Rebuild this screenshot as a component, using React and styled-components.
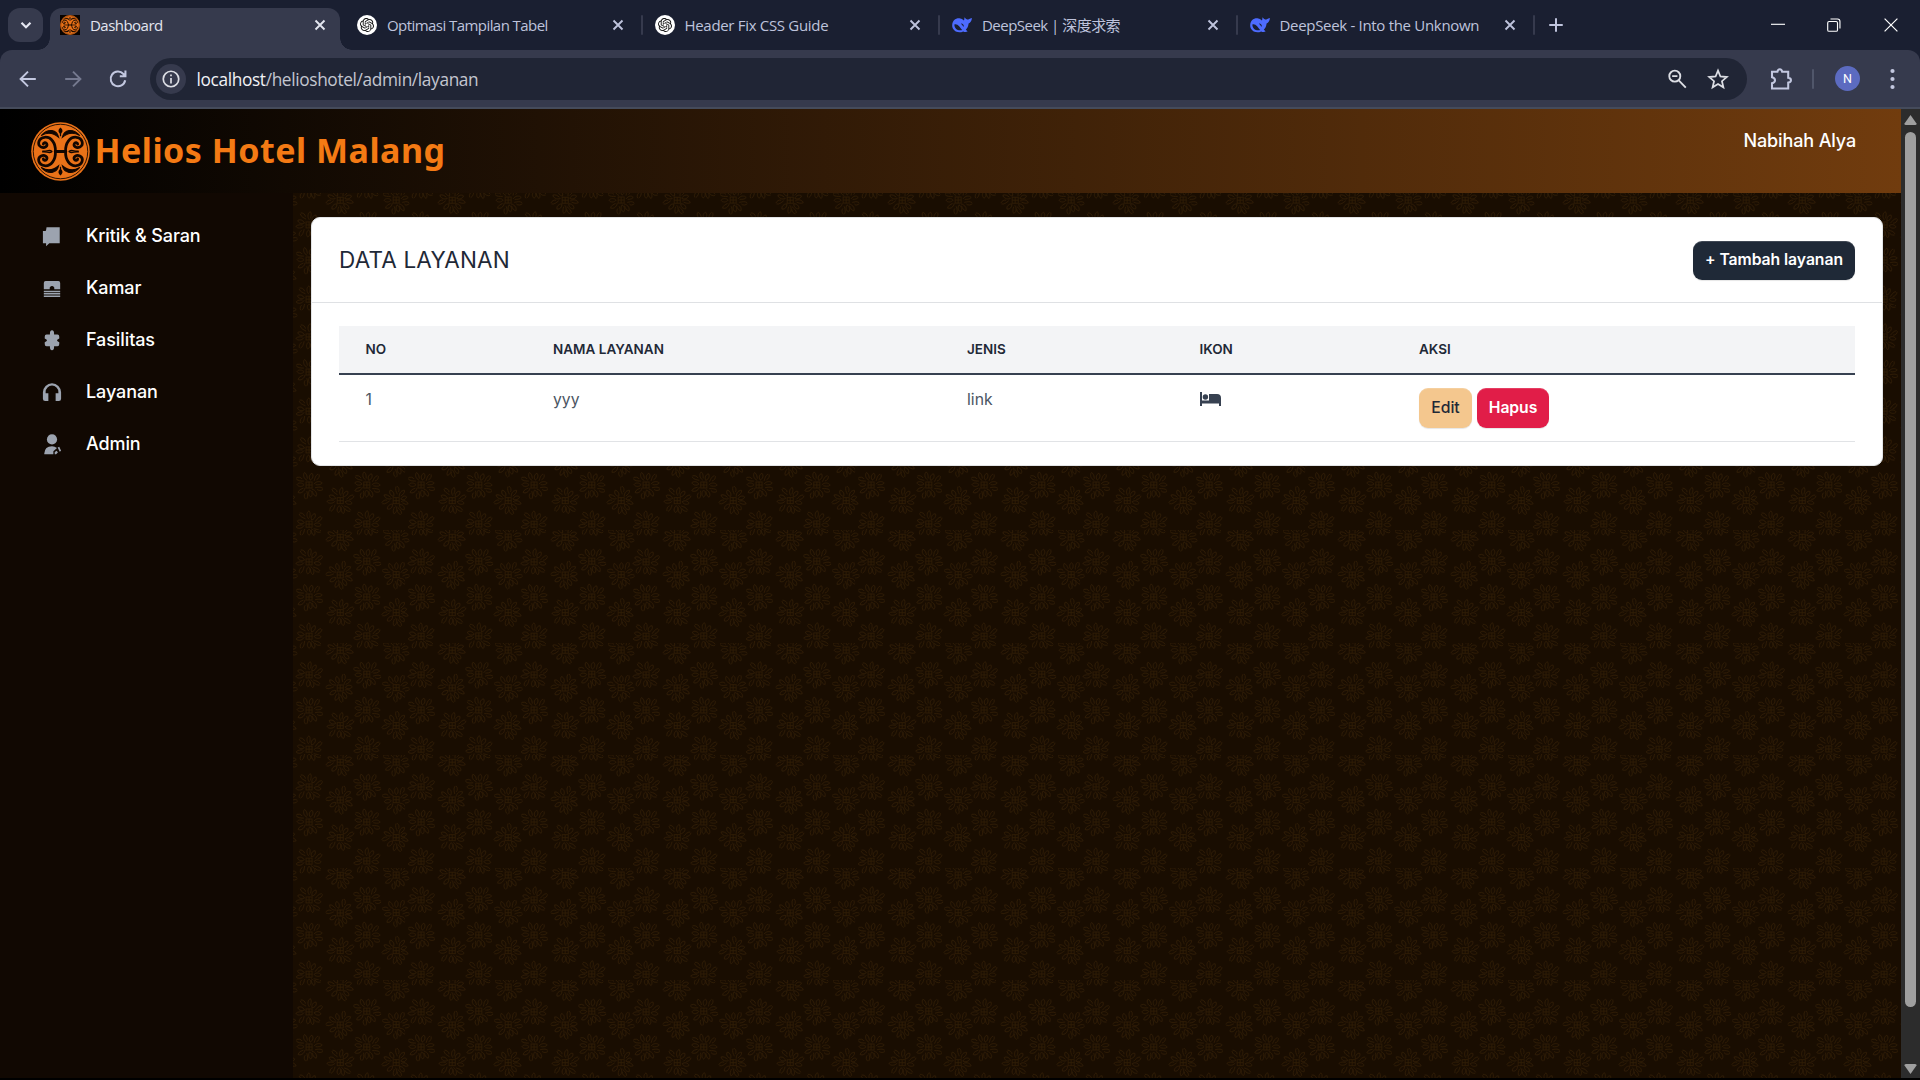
import React from "react";
import styled, { createGlobalStyle } from "styled-components";
import { SiOpenai } from "react-icons/si";

const GlobalStyle = createGlobalStyle`
  * { box-sizing: border-box; }
  body { margin: 0; background: #000; overflow: hidden; font-family: Inter, "Liberation Sans", sans-serif; }
  button { font: inherit; border: 0; margin: 0; padding: 0; background: none; color: inherit; }
  svg { display: block; flex: none; }
`;

const petalAngles = [4, 40, 66, 90, 128, 166, 196, 232, 268, 300, 334];
const petalShapes = [
  "M5 0C7-2.4 10.5-2.4 12 0C10.5 2.2 7 2.2 5 0",
  "M6.5 .5C9-.8 11-2.5 14-1.6M9 1.4C11 2.4 13.5 1.2 14.5-.6",
  "M5 0C8-2.8 12-2 13.2 .4C11.5 2 8.5 1.4 6.5 .8",
];
const flowers = [
  [16, -6.8, 0], [16, 31.8, 6], [16, 66.7, 16], [16, 105.7, 0],
  [47, 7.2, 5], [47, 44.8, 20], [47, 82.3, 9],
  [73.5, -7, 3], [73.5, 31, 10], [73.5, 66.7, 25], [73.5, 105.5, 3],
  [102.7, 7, 13], [102.7, 44.5, 4], [102.7, 82.3, 8],
];
const flowerMarkup = (x, y, turn) =>
  `<g transform='translate(${x} ${y})'><rect x='-3' y='-3' width='6' height='6'/><path d='M0-3V3M-3 0H3'/>` +
  petalAngles
    .map((a, i) => `<path transform='rotate(${a + turn})' d='${petalShapes[(i + turn) % 3]}'/>`)
    .join("") +
  "</g>";
const batik =
  "<svg xmlns='http://www.w3.org/2000/svg' width='112.5' height='112.5' viewBox='0 0 112.5 112.5'><g fill='none' stroke='#2f1c05' stroke-width='.85'>" +
  flowers.map((f) => flowerMarkup(...f) + (f[0] > 100 ? flowerMarkup(f[0] - 112.5, f[1], f[2]) : "")).join("") +
  "</g></svg>";
const batikUrl = `url("data:image/svg+xml,${encodeURIComponent(batik).replace(/'/g, "%27")}")`;

const Window = styled.div`
  width: 1920px;
  height: 1080px;
  display: flex;
  flex-direction: column;
  background: #000;
  overflow: hidden;
`;
const TabStrip = styled.div`
  height: 50px;
  display: flex;
  align-items: flex-start;
  padding: 8px 0 0 8px;
  background: #1a1f31;
  color: #c0c5de;
  font: 15px "Open Sans", "Noto Sans CJK SC", sans-serif;
`;
const TabSearch = styled.button`
  width: 35px;
  height: 34px;
  border-radius: 12px;
  background: #363a4d;
  display: grid;
  place-items: center;
  color: #e5e7f2;
`;
const Tab = styled.div`
  position: relative;
  width: ${(p) => (p.$active ? 290 : 297.5)}px;
  height: 42px;
  margin-left: ${(p) => (p.$active ? 7 : 0)}px;
  padding: 0 11px 8px ${(p) => (p.$active ? 10 : 17)}px;
  display: flex;
  align-items: center;
  gap: 10px;
  border-radius: 12px 12px 0 0;
  background: ${(p) => (p.$active ? "#363a4d" : "transparent")};
  color: ${(p) => (p.$active ? "#e3e5ef" : "#bec3dc")};
  &::before, &::after {
    content: "";
    display: ${(p) => (p.$active ? "block" : "none")};
    position: absolute;
    bottom: 0;
    width: 12px;
    height: 12px;
  }
  &::before { left: -12px; background: radial-gradient(circle at 0 0, transparent 11.5px, #363a4d 12px); }
  &::after { right: -12px; background: radial-gradient(circle at 100% 0, transparent 11.5px, #363a4d 12px); }
`;
const TabTitle = styled.span`
  flex: 1;
  white-space: nowrap;
  line-height: 20px;
  letter-spacing: ${(p) => p.$track}px;
`;
const Divider = styled.span`
  flex: none;
  width: 2px;
  height: 20px;
  margin: ${(p) => p.$margin};
  border-radius: 1px;
  background: ${(p) => p.$color || "#363a4d"};
`;
const GptBadge = styled.span`
  width: 20px;
  height: 20px;
  border-radius: 50%;
  background: #fff;
  color: #111;
  display: grid;
  place-items: center;
`;
const NewTab = styled.button`
  height: 34px;
  margin-left: 17px;
  display: grid;
  place-items: center;
`;
const WindowButtons = styled.div`
  margin-left: auto;
  display: flex;
  align-items: center;
  gap: 42px;
  height: 34px;
  padding-right: 21px;
  color: #fff;
`;
const ToolbarShell = styled.div`
  background: #1a1f31;
`;
const Toolbar = styled.div`
  height: 59px;
  display: flex;
  align-items: center;
  padding: 0 25px 0 16px;
  background: #363a4d;
  border-bottom: 2px solid #454b5b;
  border-radius: 12px 12px 0 0;
  color: #c3c8e0;
`;
const NavButtons = styled.div`
  display: flex;
  gap: 21px;
  width: 134px;
  align-items: center;
`;
const Omnibox = styled.div`
  flex: none;
  width: 1597px;
  height: 42px;
  padding: 0 18px 0 6px;
  border-radius: 21px;
  background: #202535;
  display: flex;
  align-items: center;
  color: #dcdee4;
`;
const InfoBadge = styled.span`
  width: 30px;
  height: 30px;
  border-radius: 50%;
  background: #363a4d;
  display: grid;
  place-items: center;
`;
const Address = styled.span`
  flex: 1;
  padding: 2px 0 0 10.5px;
  font: 17.3px/24px "Open Sans", sans-serif;
  letter-spacing: -0.36px;
  color: #c3c6d0;
  b { font-weight: 400; color: #f1f2f6; }
`;
const OmniActions = styled.div`
  display: flex;
  gap: 19px;
  padding-top: 1px;
`;
const Tail = styled.div`
  flex: 1;
  display: flex;
  align-items: center;
  padding-left: 22px;
`;
const ProfileSlot = styled.div`
  margin: 0 auto 0 21px;
`;
const Profile = styled.span`
  width: 25px;
  height: 25px;
  border-radius: 50%;
  background: #5c6bc0;
  color: #fff;
  display: grid;
  place-items: center;
  font: 12.5px Roboto, sans-serif;
`;
const Viewport = styled.div`
  height: 969px;
  display: flex;
`;
const Page = styled.div`
  width: 1901px;
  display: flex;
  flex-direction: column;
`;
const Header = styled.header`
  height: 84px;
  flex: none;
  display: flex;
  align-items: flex-start;
  justify-content: space-between;
  padding: 13px 45px 0 31px;
  background: linear-gradient(90deg, #000 0%, #713c0e 100%);
`;
const Brand = styled.div`
  display: flex;
  align-items: center;
  gap: 4.5px;
`;
const BrandName = styled.span`
  font: 700 34px/46px "Noto Sans", sans-serif;
  padding-bottom: 3px;
  letter-spacing: 0.5px;
  color: #f47a14;
  white-space: nowrap;
`;
const UserName = styled.span`
  margin-top: 5px;
  font-size: 18px;
  line-height: 27px;
  font-weight: 500;
  letter-spacing: -0.13px;
  color: #fff;
`;
const Body = styled.div`
  flex: 1;
  display: flex;
`;
const Sidebar = styled.nav`
  width: 293px;
  padding: 17px 0 0 40px;
  background: #110802;
`;
const SideItem = styled.a`
  height: 52px;
  display: flex;
  align-items: center;
  gap: 22px;
  color: #fff;
  font-size: 18px;
  font-weight: 500;
  letter-spacing: -0.1px;
  svg { color: #9ca3af; }
`;
const SideLabel = styled.span`
  padding-bottom: 2px;
`;
const Main = styled.main`
  flex: 1;
  padding: 24px 18px;
  background: #190d01 ${batikUrl} 0 0 / 112.5px 112.5px;
`;
const Card = styled.section`
  height: 249px;
  background: #fff;
  border: 1px solid #e2e4e6;
  border-radius: 9px;
`;
const CardHeader = styled.div`
  height: 85px;
  display: flex;
  align-items: center;
  justify-content: space-between;
  padding: 0 27px;
  border-bottom: 1px solid #dfe1e4;
`;
const CardTitle = styled.h2`
  margin: 0;
  padding-bottom: 2px;
  font-size: 22.5px;
  font-weight: 400;
  letter-spacing: 0.18px;
  color: #1f2937;
`;
const tones = {
  dark: ["#1f2937", "#fff", 600],
  sand: ["#f4c78e", "#1f2937", 500],
  red: ["#e11d48", "#fff", 600],
};
const Button = styled.button`
  width: ${(p) => p.$width}px;
  height: ${(p) => p.$height || 40}px;
  border-radius: 9px;
  background: ${(p) => tones[p.$tone][0]};
  color: ${(p) => tones[p.$tone][1]};
  font-size: 15.75px;
  font-weight: ${(p) => tones[p.$tone][2]};
  letter-spacing: -0.07px;
  padding-bottom: 2px;
  text-align: center;
  white-space: nowrap;
  box-shadow: inset 0 1px 0 rgba(255, 255, 255, 0.15), 0 1px 1px rgba(0, 0, 0, 0.1);
`;
const Table = styled.div`
  margin: 23px 27px 0;
`;
const Row = styled.div`
  display: grid;
  grid-template-columns: 187.5px 414px 232.5px 219.5px 1fr;
  padding-left: 26.5px;
`;
const HeadRow = styled(Row)`
  height: 49px;
  align-items: center;
  padding-bottom: 2px;
  background: #f3f4f6;
  border-bottom: 2px solid #374151;
  color: #1f2937;
  font-size: 13.5px;
  font-weight: 600;
`;
const DataRow = styled(Row)`
  height: 67px;
  padding-top: 13px;
  border-bottom: 1px solid #e1e3e6;
  color: #4b5563;
  font-size: 15.75px;
`;
const Cell = styled.div`
  line-height: 23px;
`;
const IconCell = styled(Cell)`
  padding-top: 4px;
  color: #374151;
`;
const Actions = styled.div`
  display: flex;
  gap: 5px;
`;
const Scrollbar = styled.div`
  width: 19px;
  display: flex;
  flex-direction: column;
  align-items: center;
  justify-content: space-between;
  padding: 6px 0 4px;
  background: #2c2c2c;
  color: #9f9f9f;
`;
const Thumb = styled.div`
  width: 11px;
  height: 875px;
  margin: 7px 0 auto;
  border-radius: 6px;
  background: #9f9f9f;
`;

const Stroke = ({ size = 20, w = 2, children }) => (
  <svg width={size} height={size} viewBox="0 0 20 20" fill="none" stroke="currentColor" strokeWidth={w}>{children}</svg>
);
const CloseIcon = () => <Stroke size={18} w={2.1}><path d="M5 5 15 15M15 5 5 15" /></Stroke>;

function Emblem({ size, boxed }) {
  return (
    <svg width={size} height={size} viewBox="0 0 58 58">
      {boxed && <rect width="58" height="58" fill="#080300" />}
      <circle cx="29" cy="29" r="28.8" fill="#ea7218" />
      <circle cx="29" cy="29" r="26.8" fill="none" stroke="#1c0b00" strokeWidth=".9" />
      <g fill="none" stroke="#120600" strokeLinecap="round">
        <path d="M24 29H34" strokeWidth="3" />
        {[1, -1].map((sx) =>
          [1, -1].map((sy) => (
            <g key={`${sx}${sy}`} transform={`translate(29 29) scale(${sx} ${sy})`}>
              <path d="M5 0C4.6-8 9-14.5 15.5-14C21.5-13.4 23.5-6.8 19-4.4C15.6-2.8 12.4-5.4 13.6-7.8C14.4-9.4 16.8-9 16.9-7.3" strokeWidth="2.7" />
              <path d="M1.8-14C3.5-21.5 12-23.5 19-15.6C13-19.4 7-18.4 1.8-14Z" fill="#120600" strokeWidth="1" />
              <path d="M8.6-.2C11-2.4 14 .4 17.5-.4" strokeWidth="1.3" />
            </g>
          ))
        )}
      </g>
      <path d="M29 5.5C32 8 31 10 29.6 11.5V14H28.4V11.5C27 10 26 8 29 5.5ZM29 52.5C32 50 31 48 29.6 46.5V44H28.4V46.5C27 48 26 50 29 52.5Z" fill="#120600" />
    </svg>
  );
}

const Whale = () => (
  <svg width="20" height="20" viewBox="0 0 20 20">
    <path fill="#4d6bfe" d="M.2 10C.4 5.4 3.8 2.8 8.2 3.4C9.8 3.6 10.8 4.4 11.8 5.4C12.6 4.8 12 3.6 12.7 2.2C13.4 3.8 14.8 4.6 16.4 4.6C17.2 3.6 18.6 3.6 19.9 3C19.8 5.8 18.4 7.8 16.6 8.4C16.3 11.2 15.2 13.2 13.8 14.8C14.4 15.4 15.1 15.8 15.6 16.6C13.8 17.2 12.4 16.9 11.2 16.4C5.6 19-.2 15.4.2 10Z" />
    <path fill="#1a1f31" d="M2.4 9.4C5.8 8.4 8 12.6 10.3 15C6 16.4 2.2 13.4 2.4 9.4ZM8.9 8.6C10.7 8.4 12.2 10.2 11.8 11.8C10.7 11.3 10.1 9.8 8.9 8.6Z" />
  </svg>
);

const tabs = [
  { title: "Dashboard", icon: "hotel", active: true, track: -0.53 },
  { title: "Optimasi Tampilan Tabel", icon: "gpt", track: -0.56 },
  { title: "Header Fix CSS Guide", icon: "gpt", track: -0.31 },
  { title: "DeepSeek | 深度求索", icon: "whale", track: -0.52 },
  { title: "DeepSeek - Into the Unknown", icon: "whale", track: -0.31 },
];

function Favicon({ kind }) {
  if (kind === "hotel") return <Emblem size={20} boxed />;
  if (kind === "gpt") return <GptBadge><SiOpenai size={14} /></GptBadge>;
  return <Whale />;
}

const sideIcons = {
  note: <path d="M4 0H18.5V17.5H7L3.5 21V17.5H0V4H2.5Q3.5 4 3.5 3Z" />,
  bed: <path d="M3 2H17Q19 2 19 4V11H12.5V9Q10 6 7.5 9V11H1V4Q1 2 3 2ZM1 12.5H19V14.2H1ZM1 15.2H19V16.8H1ZM1 17.8H19V19.5H1Z" />,
  puzzle: <path d="M10-1Q12.5-1 12.3 3.5H16Q18 3.5 18 6V8Q15.5 9 15.5 10T18 12V14Q18 16.5 16 16.5H12.3Q12.5 21 10 21T7.7 16.5H4Q2 16.5 2 14V12Q4.5 11 4.5 10T2 8V6Q2 3.5 4 3.5H7.7Q7.5-1 10-1Z" />,
  phones: <path d="M0 17V10A10 10 0 0 1 20 10V17Q20 19.5 17.5 19.5H14V11H17V9.5A7 7 0 0 0 3 9.5V11H6V19.5H2.5Q0 19.5 0 17Z" />,
  user: <><circle cx="10" cy="4.6" r="5.6" /><path d="M1.5 20Q2 12 10 12Q13 12 15.5 14L11.5 17.5V21H1.5ZM13 18.5 15.2 17 16.5 19 14.5 21H13ZM16.2 13.5 18 12.5 20 17 18.5 18Z" /></>,
};
const menu = [
  ["note", "Kritik & Saran"],
  ["bed", "Kamar"],
  ["puzzle", "Fasilitas"],
  ["phones", "Layanan"],
  ["user", "Admin"],
];

function ToolbarTail() {
  return (
    <Tail>
      <Stroke size={24} w={1.7}>
        <path d="M2.5 4H7Q7.3 1.8 9 1.8T11 4H16V9Q18.3 9.3 18.3 11T16 13V18H2.5V13.5Q5 13 5 11T2.5 8.5Z" />
      </Stroke>
      <Divider $margin="0 0 0 19px" $color="#50566a" />
      <ProfileSlot><Profile>N</Profile></ProfileSlot>
      <svg width="5" height="22" viewBox="0 0 5 22" fill="currentColor">
        <circle cx="2.5" cy="3" r="2.1" /><circle cx="2.5" cy="11" r="2.1" /><circle cx="2.5" cy="19" r="2.1" />
      </svg>
    </Tail>
  );
}

export default function App() {
  return (
    <Window>
      <GlobalStyle />
      <TabStrip>
        <TabSearch><Stroke size={18} w={2.4}><path d="m5 7.5 5 5 5-5" /></Stroke></TabSearch>
        {tabs.map((t, i) => (
          <React.Fragment key={t.title}>
            <Tab $active={t.active}>
              <Favicon kind={t.icon} />
              <TabTitle $track={t.track}>{t.title}</TabTitle>
              <CloseIcon />
            </Tab>
            {i > 0 && <Divider $margin="7px -5px 0 3px" />}
          </React.Fragment>
        ))}
        <NewTab><Stroke size={18} w={2.2}><path d="M10 2.5V17.5M2.5 10H17.5" /></Stroke></NewTab>
        <WindowButtons>
          <Stroke size={14} w={1.6}><path d="M0 9H20" /></Stroke>
          <Stroke size={14} w={1.6}><rect x="1" y="5" width="14" height="14" rx="2" /><path d="M5 1.5H15Q18.5 1.5 18.5 5V15" /></Stroke>
          <Stroke size={16} w={1.5}><path d="M2 2 18 18M18 2 2 18" /></Stroke>
        </WindowButtons>
      </TabStrip>
      <ToolbarShell>
        <Toolbar>
          <NavButtons>
            <Stroke size={24} w={1.6}><path d="M16.5 10H4M10 3.8 3.8 10 10 16.2" /></Stroke>
            <Stroke size={24} w={1.6}><path d="M3.5 10H16M10 3.8 16.2 10 10 16.2" opacity=".45" /></Stroke>
            <Stroke size={24} w={1.7}><path d="M16 11A6.1 6.1 0 1 1 14.5 5.8L16 7.3M16.2 3V7.7H11.5" /></Stroke>
          </NavButtons>
          <Omnibox>
            <InfoBadge><Stroke size={18} w={1.9}><circle cx="10" cy="10" r="8.6" /><path d="M10 9V15M10 5V7" /></Stroke></InfoBadge>
            <Address><b>localhost</b>/helioshotel/admin/layanan</Address>
            <OmniActions>
              <Stroke size={22} w={1.7}><circle cx="8" cy="7.4" r="5" /><path d="M5.6 7.4H10.4M11.6 11.2 18 17.8" /></Stroke>
              <Stroke size={22} w={1.6}><path d="m10 2.4 2.2 5.3 5.8.5-4.4 3.8 1.3 5.6-4.9-3-4.9 3 1.3-5.6L2 8.2l5.8-.5Z" /></Stroke>
            </OmniActions>
          </Omnibox>
          <ToolbarTail />
        </Toolbar>
      </ToolbarShell>
      <Viewport>
        <Page>
          <Header>
            <Brand><Emblem size={59} /><BrandName>Helios Hotel Malang</BrandName></Brand>
            <UserName>Nabihah Alya</UserName>
          </Header>
          <Body>
            <Sidebar>
              {menu.map(([icon, label]) => (
                <SideItem key={label}>
                  <svg width="24" height="21" viewBox="-3.2 -1.4 26.4 23.1" fill="currentColor">{sideIcons[icon]}</svg>
                  <SideLabel>{label}</SideLabel>
                </SideItem>
              ))}
            </Sidebar>
            <Main>
              <Card>
                <CardHeader>
                  <CardTitle>DATA LAYANAN</CardTitle>
                  <Button $tone="dark" $width={162} $height={39}>+ Tambah layanan</Button>
                </CardHeader>
                <Table>
                  <HeadRow><span>NO</span><span>NAMA LAYANAN</span><span>JENIS</span><span>IKON</span><span>AKSI</span></HeadRow>
                  <DataRow>
                    <Cell>1</Cell>
                    <Cell>yyy</Cell>
                    <Cell>link</Cell>
                    <IconCell>
                      <svg width="21" height="15" viewBox="0 0 21 15" fill="currentColor">
                        <path d="M0 0H2V8.5H9V2H17Q21 2 21 6V14H19V11.5H2V14H0Z" />
                        <circle cx="5.4" cy="5" r="2.7" />
                      </svg>
                    </IconCell>
                    <Actions>
                      <Button $tone="sand" $width={53}>Edit</Button>
                      <Button $tone="red" $width={72}>Hapus</Button>
                    </Actions>
                  </DataRow>
                </Table>
              </Card>
            </Main>
          </Body>
        </Page>
        <Scrollbar>
          <svg width="13" height="10" viewBox="0 0 13 10" fill="currentColor"><path d="M6.5 0 12.5 8.5Q13 10 11 10H2Q0 10 .5 8.5Z" /></svg>
          <Thumb />
          <svg width="13" height="10" viewBox="0 0 13 10" fill="currentColor"><path d="M6.5 10 12.5 1.5Q13 0 11 0H2Q0 0 .5 1.5Z" /></svg>
        </Scrollbar>
      </Viewport>
    </Window>
  );
}
